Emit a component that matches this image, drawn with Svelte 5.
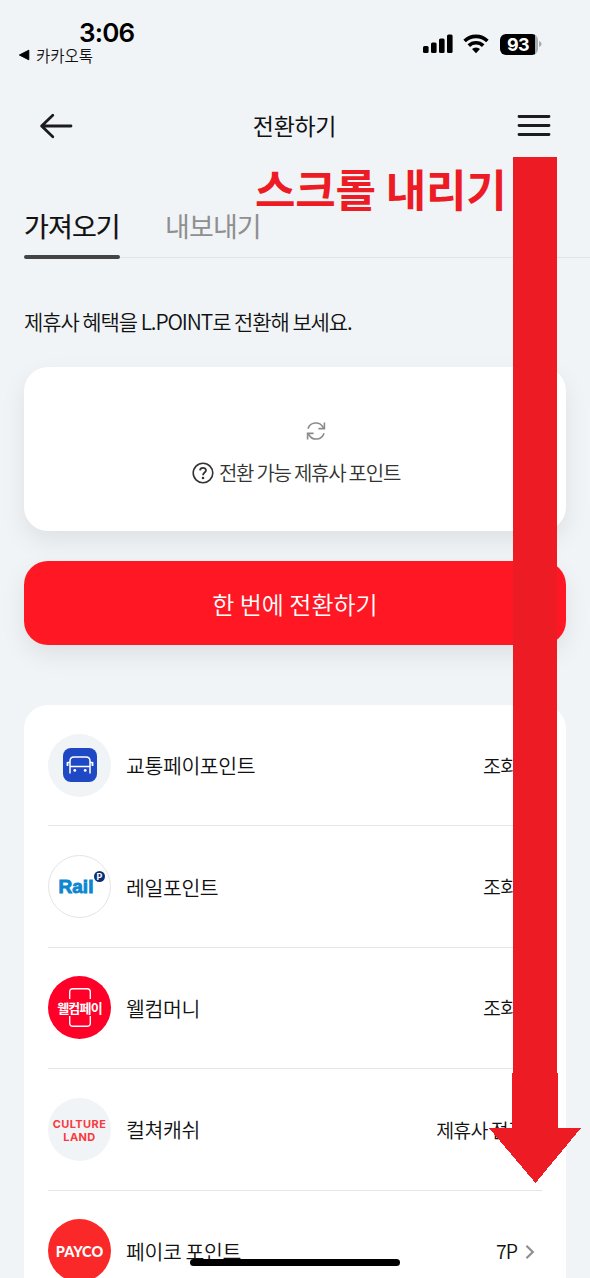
<script>
    const partners = [
        { id: 'bus', name: '교통페이포인트', status: '조회', arrow: true },
        { id: 'rail', name: '레일포인트', status: '조회', arrow: true },
        { id: 'welcome', name: '웰컴머니', status: '조회', arrow: true },
        { id: 'culture', name: '컬쳐캐쉬', status: '제휴사 점검중', arrow: false },
        { id: 'payco', name: '페이코 포인트', status: '7P', arrow: true },
    ];

    let tab = $state('in');
</script>

<div class="screen">
    <div class="status-bar">
        <div class="clock">
            <span class="time">3:06</span>
            <span class="back-app">
                <svg width="12" height="12" viewBox="0 0 12 12">
                    <path d="M1.4 6 L10.8 1.2 V10.8 Z" fill="#000" stroke="#000" stroke-linejoin="round" />
                </svg>
                카카오톡
            </span>
        </div>
        <div class="indicators">
            <svg width="30" height="20" viewBox="0 0 30 20">
                <rect x="0" y="12" width="5.6" height="7" rx="1.5" />
                <rect x="8" y="8.5" width="5.6" height="10.5" rx="1.5" />
                <rect x="16" y="4.5" width="5.6" height="14.5" rx="1.5" />
                <rect x="24" y="0.5" width="5.6" height="18.5" rx="1.5" />
            </svg>
            <svg class="wifi" width="26" height="20" viewBox="0 0 26 20">
                <g fill="none" stroke="#000" stroke-width="3.6">
                    <path d="M1.6 7 A16.4 16.4 0 0 1 24.4 7" />
                    <path d="M5.8 11.6 A10.4 10.4 0 0 1 20.2 11.6" />
                </g>
                <path d="M13 19.2 L9 15.1 A5.6 5.6 0 0 1 17 15.1 Z" />
            </svg>
            <div class="battery"><span>93</span></div>
            <svg class="nub" width="3" height="8" viewBox="0 0 3 8">
                <path d="M0 1 Q2.6 2 2.6 4 T0 7 Z" fill="#a9acae" />
            </svg>
        </div>
    </div>

    <header>
        <button aria-label="뒤로">
            <svg width="34" height="26" viewBox="0 0 34 26">
                <path
                    d="M13.8 2.2 L2.6 13 L13.8 23.8 M2.8 13 H32"
                    fill="none"
                    stroke="#1c1c1e"
                    stroke-width="2.8"
                    stroke-linecap="round"
                    stroke-linejoin="round"
                />
            </svg>
        </button>
        <h1>전환하기</h1>
        <button aria-label="메뉴">
            <svg width="34" height="24" viewBox="0 0 34 24">
                <path
                    d="M2 2.5 H32 M2 11.5 H32 M2 20.5 H32"
                    stroke="#1c1c1e"
                    stroke-width="2.8"
                    stroke-linecap="round"
                />
            </svg>
        </button>
    </header>

    <nav>
        <button class="tab" class:active={tab === 'in'} onclick={() => (tab = 'in')}>가져오기</button>
        <button class="tab" class:active={tab === 'out'} onclick={() => (tab = 'out')}>내보내기</button>
    </nav>

    <main>
        <p class="intro">제휴사 혜택을 L.POINT로 전환해 보세요.</p>

        <section class="summary">
            <svg width="20" height="20" viewBox="0 0 20 20" fill="none" stroke="#8b8b8b" stroke-width="1.6">
                <path d="M2 7.8 A8.2 8.2 0 0 1 16.8 5.8 L18 7.6" />
                <path d="M18.4 1.4 V7.6 H12.4" />
                <path d="M18 12.2 A8.2 8.2 0 0 1 3.2 14.2 L2 12.4" />
                <path d="M1.6 18.6 V12.4 H7.6" />
            </svg>
            <div class="summary-label">
                <svg width="22" height="22" viewBox="0 0 22 22" fill="none" stroke="#333" stroke-width="1.6">
                    <circle cx="11" cy="11" r="9.8" />
                    <path d="M8 8.4 C8.2 4.9 14 5 14 8.3 C14 10.5 11 10.6 11 13.2" stroke-width="1.8" />
                    <circle cx="11" cy="16" r="1.3" fill="#333" stroke="none" />
                </svg>
                전환 가능 제휴사 포인트
            </div>
        </section>

        <button class="convert">한 번에 전환하기</button>

        <ul>
            {#each partners as partner (partner.id)}
                <li>
                    <div class={`logo ${partner.id}`}>
                        {#if partner.id === 'bus'}
                            <svg width="34" height="34" viewBox="0 0 34 34">
                                <rect width="34" height="34" rx="8" fill="#1f49c4" />
                                <g fill="none" stroke="#fff" stroke-width="1.5">
                                    <path d="M7 25.500 V13 Q7 9 11 9 H23 Q27 9 27 13 V25.500" />
                                    <path d="M7 18.500 H27" />
                                    <path d="M4.5 14 V18 M29.500 14 V18" stroke-width="1.8" />
                                    <path d="M4.5 14.4 H7 M29.500 14.4 H27" />
                                </g>
                                <circle cx="11.8" cy="22.4" r="1.4" fill="#fff" />
                                <circle cx="22.2" cy="22.4" r="1.4" fill="#fff" />
                            </svg>
                        {:else if partner.id === 'rail'}
                            <span class="rail-word">Rail</span>
                            <span class="rail-badge">P</span>
                        {:else if partner.id === 'welcome'}
                            <svg width="22" height="11" viewBox="0 0 22 11" fill="none" stroke="#fff" stroke-width="1.4">
                                <path d="M0.7 11 V4 Q0.7 0.7 4 0.7 H18 Q21.3 0.7 21.3 4 V11" />
                            </svg>
                            <span>웰컴페이</span>
                            <svg width="22" height="11" viewBox="0 0 22 11" fill="none" stroke="#fff" stroke-width="1.4">
                                <path d="M0.7 0 V7 Q0.7 10.3 4 10.3 H18 Q21.3 10.3 21.3 7 V0" />
                            </svg>
                        {:else if partner.id === 'culture'}
                            <span>CULTURE</span>
                            <span>LAND</span>
                        {:else}
                            <span>PAYCO</span>
                        {/if}
                    </div>
                    <span class="name">{partner.name}</span>
                    <span class="status">{partner.status}</span>
                    {#if partner.arrow}
                        <svg class="chevron" width="10" height="16" viewBox="0 0 10 16">
                            <path d="M1.4 1.8 L7.8 8 L1.4 14.2" fill="none" stroke="#8e8e8e" stroke-width="2.2" />
                        </svg>
                    {/if}
                </li>
            {/each}
        </ul>
    </main>

    <div class="home-indicator"></div>

    <div class="guide-text">스크롤 내리기</div>
    <svg class="guide-arrow" width="92" height="1027" viewBox="0 0 92 1027" shape-rendering="crispEdges">
        <path d="M24 0 H68 V916 H69 V971 H92 L46.500 1026 L0 971 H23 V916 H24 Z" fill="#ed1c24" />
    </svg>
</div>

<style>
    :global(body) {
        background: #f0f4f7;
    }

    .screen {
        background: #f0f4f7;
        box-sizing: border-box;
        color: #111;
        font-family: 'Noto Sans CJK KR', sans-serif;
        font-weight: 350;
        height: 1278px;
        overflow: hidden;
        position: relative;
        width: 590px;
    }

    button {
        background: none;
        border: none;
        color: inherit;
        display: block;
        font-family: inherit;
        font-weight: inherit;
        padding: 0;
        white-space: nowrap;
    }

    .status-bar {
        display: flex;
        height: 88px;
        justify-content: space-between;
    }

    .clock {
        display: flex;
        flex-direction: column;
        padding: 18px 0 0 18px;
    }

    .time {
        color: #000;
        font-family: Inter, sans-serif;
        font-size: 26px;
        font-weight: 600;
        letter-spacing: -0.8px;
        line-height: 30px;
        padding-left: 61px;
    }

    .back-app {
        align-items: center;
        display: flex;
        font-size: 15.5px;
        gap: 6px;
        line-height: 14px;
    }

    .indicators {
        align-items: center;
        display: flex;
        height: 20px;
        padding: 34px 48px 0 0;
    }

    .wifi {
        margin: 0 11px 0 10px;
    }

    .battery {
        background: linear-gradient(90deg, #000 35px, #a9acae 35px);
        border-radius: 6px;
        color: #fff;
        font-family: Inter, sans-serif;
        font-size: 18px;
        font-weight: 700;
        height: 21px;
        letter-spacing: -0.6px;
        line-height: 21px;
        width: 38px;
    }

    .battery span {
        display: block;
        text-align: center;
        width: 36px;
    }

    .nub {
        margin-left: 1px;
    }

    header {
        align-items: center;
        display: flex;
        height: 76px;
        justify-content: space-between;
        padding: 0 39px;
    }

    header svg {
        display: block;
    }

    h1 {
        font-size: 23px;
        font-weight: 400;
        letter-spacing: -0.3px;
        margin: -3px 0 0 -1px;
    }

    nav {
        background: linear-gradient(#dfe3e6, #dfe3e6) 24px 93px / 100% 1px no-repeat;
        display: flex;
        gap: 45px;
        height: 95px;
        padding-left: 24px;
    }

    .tab {
        box-sizing: border-box;
        color: #8f8f8f;
        font-size: 27px;
        font-weight: 400;
        height: 95px;
        letter-spacing: -0.9px;
        line-height: 36px;
        padding-top: 28px;
        position: relative;
        text-align: left;
        width: 96px;
    }

    .tab.active {
        -webkit-text-stroke: 0.2px #111;
        color: #111;
    }

    .tab.active::after {
        background: #444;
        border-radius: 2px;
        bottom: 0;
        content: '';
        height: 4px;
        left: 0;
        position: absolute;
        width: 96px;
    }

    main {
        padding: 0 24px;
    }

    .intro {
        font-size: 21px;
        letter-spacing: -1.08px;
        line-height: 30px;
        margin: 0;
        padding: 47px 0 31px;
    }

    .summary {
        align-items: center;
        background: #fff;
        border-radius: 24px;
        box-shadow: 0 10px 24px rgba(0, 0, 0, 0.08);
        box-sizing: border-box;
        display: flex;
        flex-direction: column;
        gap: 19px;
        height: 164px;
        margin-bottom: 30px;
        padding: 54px 0 0;
    }

    .summary > svg {
        margin-left: 41px;
    }

    .summary-label {
        align-items: center;
        color: #333;
        display: flex;
        font-size: 20px;
        gap: 5px;
        letter-spacing: -1.25px;
        line-height: 26px;
        padding-left: 2px;
    }

    .convert {
        background: #ff1823;
        border-radius: 24px;
        box-shadow: 0 10px 24px rgba(0, 0, 0, 0.08);
        color: #fff;
        font-size: 24px;
        height: 84px;
        width: 100%;
    }

    ul {
        background: #fff;
        border-radius: 24px 24px 0 0;
        list-style: none;
        margin: 60px 0 0;
        padding: 0 24px;
    }

    li {
        align-items: center;
        border-bottom: 1px solid #e6e6e6;
        box-sizing: border-box;
        display: flex;
        height: 121.4px;
    }

    .logo {
        align-items: center;
        border-radius: 50%;
        box-sizing: border-box;
        display: flex;
        flex-direction: column;
        height: 63px;
        justify-content: center;
        line-height: 1;
        position: relative;
        width: 63px;
    }

    .bus,
    .culture {
        background: #f0f4f7;
    }

    .bus svg {
        margin-left: 1px;
    }

    .rail {
        border: 1px solid #e4e4e4;
    }

    .rail-word {
        -webkit-text-stroke: 0.9px #0b86d0;
        color: #0b86d0;
        font-family: 'Liberation Sans', sans-serif;
        font-size: 19px;
        font-weight: 700;
        margin: -1px 7px 0 0;
    }

    .rail-badge {
        background: #0b2f78;
        border-radius: 50%;
        color: #fff;
        font-family: Inter, sans-serif;
        font-size: 9px;
        font-weight: 700;
        height: 11px;
        line-height: 11px;
        position: absolute;
        right: 5px;
        text-align: center;
        top: 15px;
        width: 11px;
    }

    .welcome {
        background: #ff0028;
        color: #fff;
        font-size: 13px;
        font-weight: 700;
        letter-spacing: -0.8px;
    }

    .welcome span {
        line-height: 17px;
    }

    .culture {
        color: #f93a3c;
        font-family: Inter, sans-serif;
        font-size: 11px;
        font-weight: 700;
        letter-spacing: 0.4px;
        line-height: 13px;
        padding-top: 3px;
    }

    .payco {
        background: #fa2828;
        color: #fff;
        font-family: Lato, sans-serif;
        font-size: 14.5px;
        font-weight: 900;
        padding-top: 2px;
    }

    .name {
        flex: 1;
        font-size: 20.5px;
        letter-spacing: -0.4px;
        margin-left: 15px;
    }

    .status {
        font-size: 19.5px;
        letter-spacing: -0.9px;
    }

    .chevron {
        margin: 2px 7px 0 8px;
    }

    .home-indicator {
        background: #000;
        border-radius: 4px;
        height: 7px;
        left: 190px;
        position: absolute;
        top: 1259px;
        width: 210px;
    }

    .guide-text {
        color: #ed1c24;
        font-size: 44px;
        font-weight: 700;
        left: 255px;
        letter-spacing: -0.2px;
        line-height: 60px;
        position: absolute;
        top: 158px;
        white-space: nowrap;
    }

    .guide-arrow {
        left: 489px;
        position: absolute;
        top: 157px;
    }
</style>
